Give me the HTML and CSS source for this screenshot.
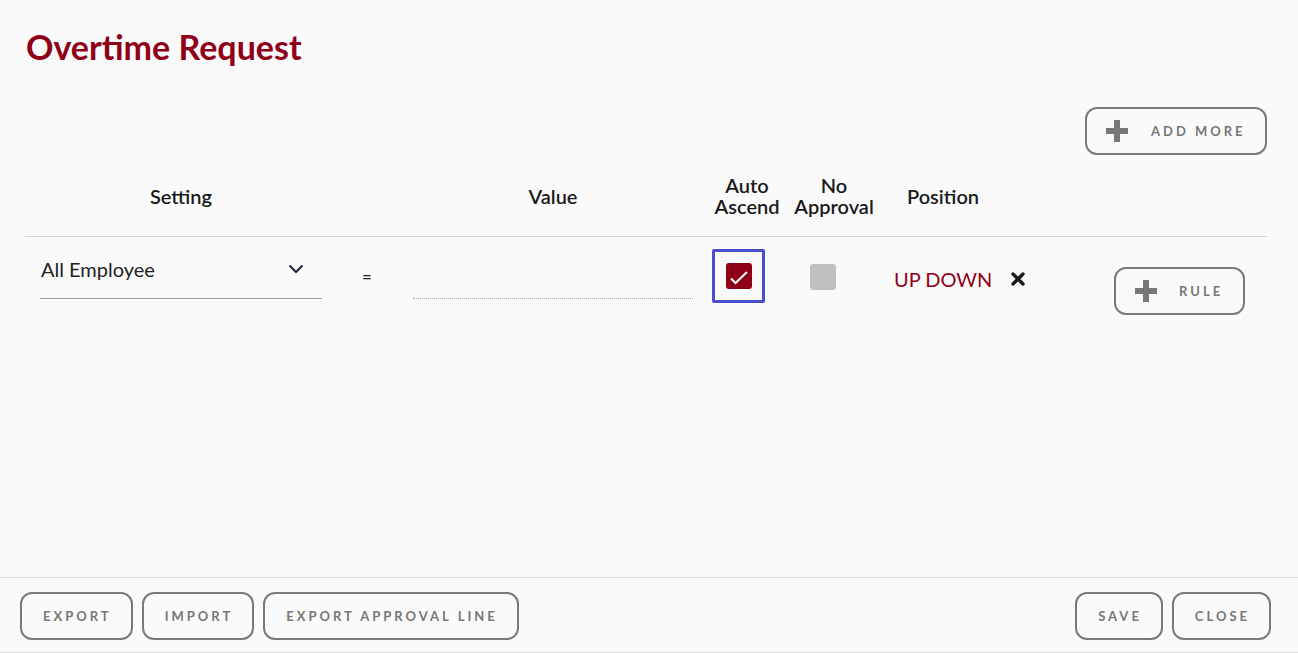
FILE: index.html
```html
<!DOCTYPE html>
<html lang="en">
<head>
<meta charset="utf-8">
<title>Overtime Request</title>
<link rel="stylesheet" href="styles.css">
</head>
<body>
<div class="page">
  <main class="main">
    <h1 class="title">Overtime Request</h1>
    <div class="toolbar">
      <button class="btn btn-icon add-more">
        <svg class="plus" viewBox="0 0 22 22" width="22" height="22"><path d="M8 0h6v8h8v6h-8v8H8v-8H0V8h8z" fill="#777"/></svg>
        <span>ADD MORE</span>
      </button>
    </div>
    <div class="grid head">
      <div class="hcell">Setting</div>
      <div class="hcell"></div>
      <div class="hcell">Value</div>
      <div class="hcell"><span class="hl">Auto</span><span class="hl">Ascend</span></div>
      <div class="hcell"><span class="hl">No</span><span class="hl">Approval</span></div>
      <div class="hcell">Position</div>
      <div class="hcell"></div>
    </div>
    <div class="grid row">
      <div class="cell">
        <div class="select">
          <span>All Employee</span>
          <svg class="chev" viewBox="0 0 16 10" width="16" height="10"><path d="M1.5 1.5l6.5 6.5 6.5-6.5" fill="none" stroke="#1e2a3a" stroke-width="2.2"/></svg>
        </div>
      </div>
      <div class="cell eq">=</div>
      <div class="cell"><div class="value-input"></div></div>
      <div class="cell">
        <div class="focus-ring">
          <div class="checkbox checked">
            <svg viewBox="0 0 26 26" width="26" height="26"><path d="M5 15.5l4.5 4.5L21 9" fill="none" stroke="#fff" stroke-width="2"/></svg>
          </div>
        </div>
      </div>
      <div class="cell"><div class="checkbox off"></div></div>
      <div class="cell pos">
        <span class="updown">UP DOWN</span>
        <svg class="xmark" viewBox="0 0 14 14" width="14" height="14"><path d="M2 2l10 10M12 2L2 12" stroke="#1a1a1a" stroke-width="3.4" stroke-linecap="round"/></svg>
      </div>
      <div class="cell rule-cell">
        <button class="btn btn-icon rule">
          <svg class="plus" viewBox="0 0 22 22" width="22" height="22"><path d="M8 0h6v8h8v6h-8v8H8v-8H0V8h8z" fill="#777"/></svg>
          <span>RULE</span>
        </button>
      </div>
    </div>
  </main>
  <footer class="footer">
    <div class="group">
      <button class="btn fbtn">EXPORT</button>
      <button class="btn fbtn">IMPORT</button>
      <button class="btn fbtn">EXPORT APPROVAL LINE</button>
    </div>
    <div class="group">
      <button class="btn fbtn">SAVE</button>
      <button class="btn fbtn">CLOSE</button>
    </div>
  </footer>
</div>
</body>
</html>
```
FILE: styles.css
```css
* { box-sizing: border-box; }
html, body { margin: 0; padding: 0; }
body {
  background: #fafafa;
  font-family: Lato, "Open Sans", "Liberation Sans", sans-serif;
  color: #222;
}
.page {
  height: 653px;
  display: flex;
  flex-direction: column;
}
.main {
  flex: 1;
  padding: 0 31px 0 25px;
}
.title {
  margin: 0;
  padding: 28px 0 0 1px;
  font-size: 34px;
  font-weight: 700;
  line-height: 38px;
  color: #8f0018;
}
.toolbar {
  display: flex;
  justify-content: flex-end;
  margin-top: 41px;
}
.btn {
  font-family: Lato, "Open Sans", "Liberation Sans", sans-serif;
  background: transparent;
  border: 2px solid #7a7a7a;
  border-radius: 12px;
  color: #777;
  font-weight: 700;
  font-size: 13px;
  letter-spacing: 3px;
  cursor: pointer;
}
.btn-icon {
  display: flex;
  align-items: center;
  padding: 0 0 0 19px;
}
.btn-icon .plus { flex: none; }
.add-more {
  width: 182px;
  height: 48px;
}
.add-more span { margin-left: 23px; }
.grid {
  display: grid;
  grid-template-columns: 312px 60px 312px 76px 98px 120px 1fr;
}
.head {
  margin-top: 20px;
  padding-bottom: 19px;
  border-bottom: 1px solid #d4d4d4;
  align-items: center;
}
.hcell {
  text-align: center;
  font-size: 20px;
  font-weight: 600;
  line-height: 21px;
  color: #1a1a1a;
}
.hl { display: block; }
.row {
  padding-top: 12px;
  align-items: start;
}
.cell { min-height: 10px; }
.select {
  margin: 0 15px;
  height: 50px;
  padding: 9px 0 0 1px;
  border-bottom: 1px solid #9a9a9a;
  display: flex;
  justify-content: space-between;
  align-items: flex-start;
  font-size: 20px;
  line-height: 22px;
  color: #222;
}
.chev { margin: 6px 18px 0 0; flex: none; }
.eq {
  text-align: center;
  font-size: 17px;
  line-height: 18px;
  margin-top: 19px;
}
.value-input {
  margin: 0 16px;
  height: 50px;
  border-bottom: 1px dotted #aaa;
}
.focus-ring {
  margin-left: 3px;
  width: 53px;
  height: 54px;
  border: 3px solid #4a4fd0;
  border-radius: 2px;
  display: flex;
  align-items: center;
  justify-content: center;
}
.checkbox {
  width: 26px;
  height: 26px;
  border-radius: 3px;
}
.checkbox.checked { background: #8f0018; }
.checkbox svg { display: block; }
.checkbox.off {
  background: #c0c0c0;
  margin: 15px 0 0 25px;
}
.pos {
  display: flex;
  align-items: center;
  margin-top: 19px;
  padding-left: 11px;
  white-space: nowrap;
}
.updown {
  font-size: 20px;
  line-height: 22px;
  color: #8f0018;
  flex: none;
}
.xmark { margin-left: 19px; flex: none; }
.rule-cell { padding-left: 111px; }
.rule {
  margin-top: 18px;
  width: 131px;
  height: 48px;
}
.rule span { margin-left: 22px; }
.footer {
  height: 76px;
  border-top: 1px solid #dcdcdc;
  border-bottom: 1px solid #dcdcdc;
  display: flex;
  justify-content: space-between;
  padding: 14px 27px 0 20px;
}
.group {
  display: flex;
  gap: 9px;
  align-items: flex-start;
}
.fbtn {
  height: 48px;
  padding: 0 19px 0 21px;
}
```
